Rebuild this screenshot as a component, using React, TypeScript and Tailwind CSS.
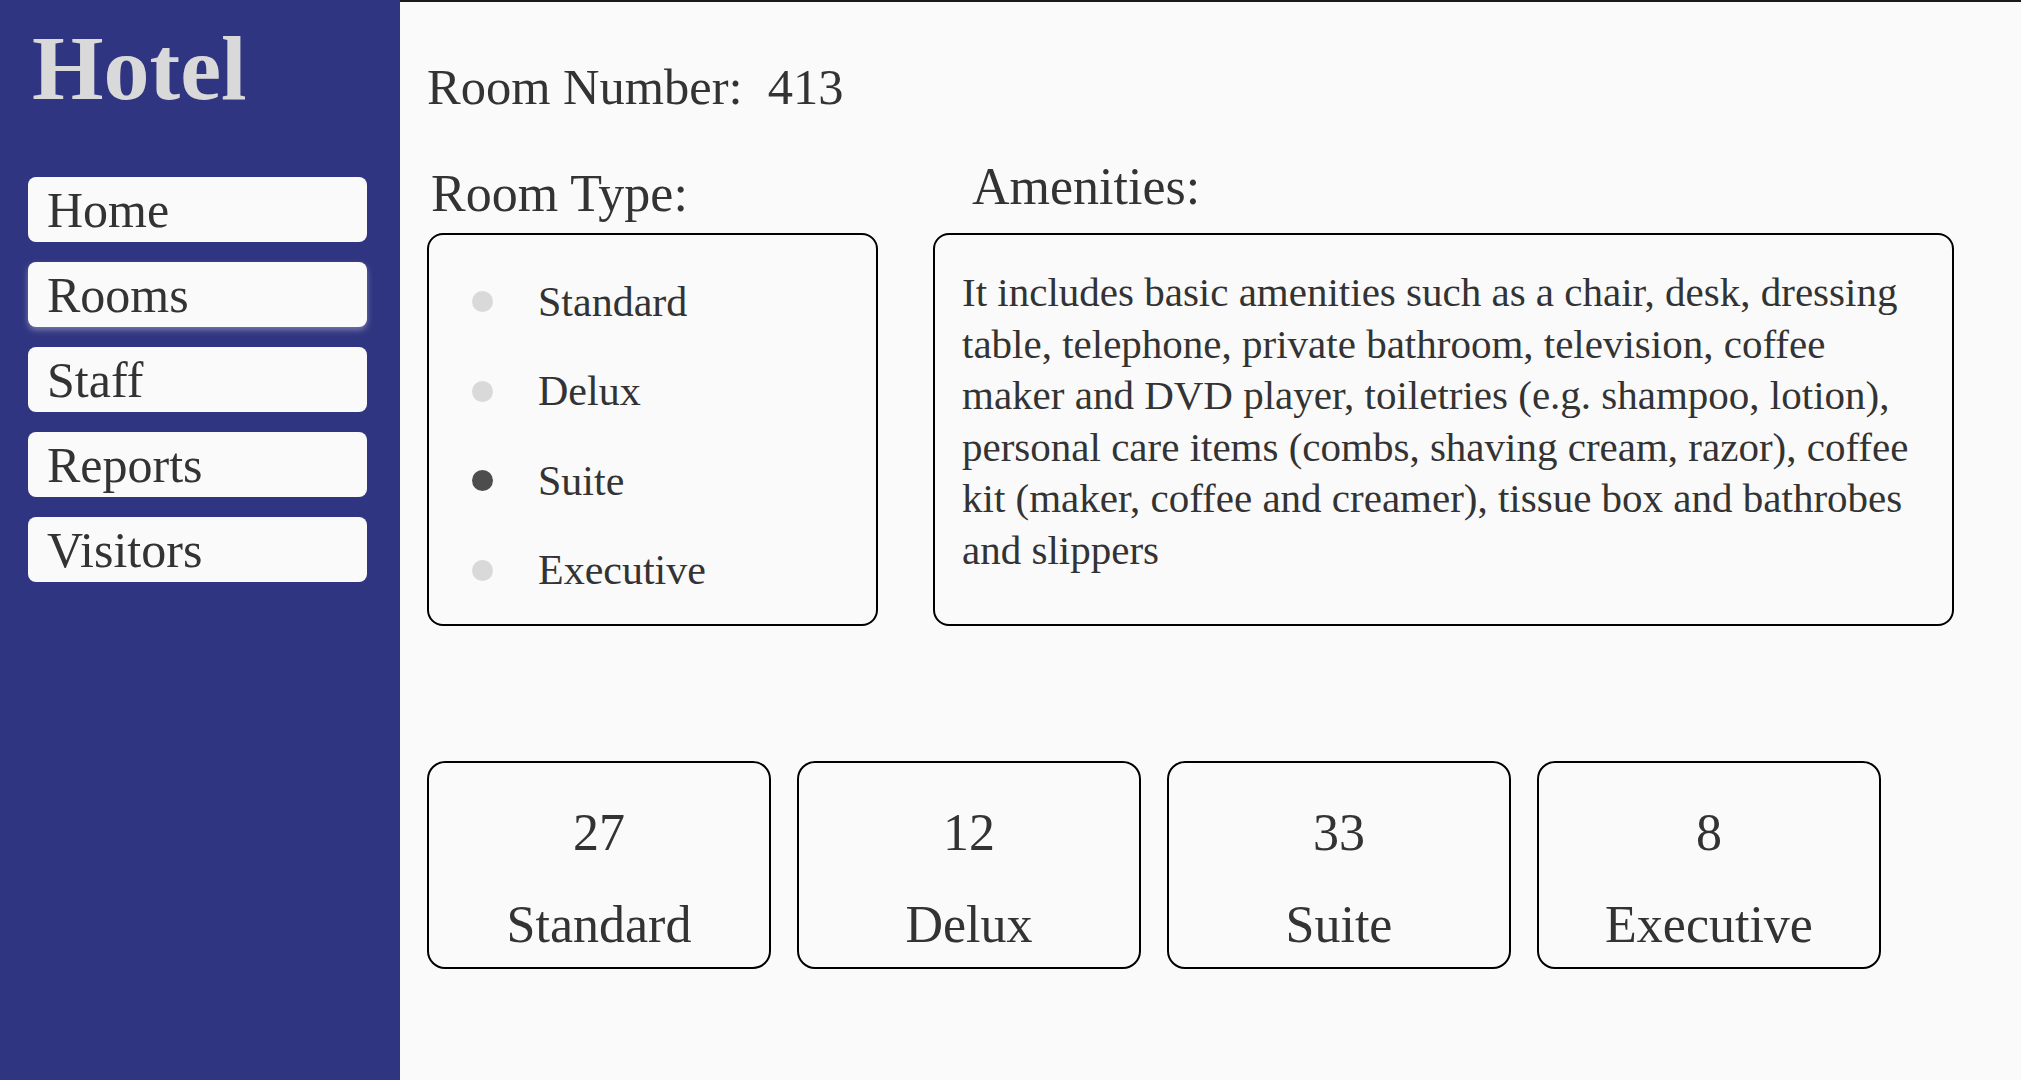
import { useState } from "react";

const navItems = ["Home", "Rooms", "Staff", "Reports", "Visitors"];
const roomTypes = ["Standard", "Delux", "Suite", "Executive"];

const amenityLines = [
  "It includes basic amenities such as a chair, desk, dressing",
  "table, telephone, private bathroom, television, coffee",
  "maker and DVD player, toiletries (e.g. shampoo, lotion),",
  "personal care items (combs, shaving cream, razor), coffee",
  "kit (maker, coffee and creamer), tissue box and bathrobes",
  "and slippers",
];

const counts = [
  { count: 27, label: "Standard" },
  { count: 12, label: "Delux" },
  { count: 33, label: "Suite" },
  { count: 8, label: "Executive" },
];

export default function App() {
  const [selected, setSelected] = useState("Suite");

  return (
    <div className="flex h-[1080px] w-full font-['Liberation_Serif',serif] text-[#333]">
      {/* Sidebar */}
      <aside className="flex w-[400px] shrink-0 flex-col bg-[#2f3580] pl-[28px] pt-[18px]">
        <h1 className="pl-[4px] text-[92px] font-bold leading-[100px] text-[#d9d9d9]">Hotel</h1>
        <nav className="mt-[59px] flex w-[339px] flex-col gap-[20px]">
          {navItems.map((item) => (
            <div
              key={item}
              className={
                item === "Rooms"
                  ? "h-[65px] rounded-[8px] bg-[#fafafa] pl-[19px] pt-[1px] text-[50px] leading-[65px] shadow-[0_3px_6px_rgba(255,255,255,0.35)]"
                  : "h-[65px] rounded-[8px] bg-[#fafafa] pl-[19px] pt-[1px] text-[50px] leading-[65px]"
              }
            >
              {item}
            </div>
          ))}
        </nav>
      </aside>

      {/* Main content */}
      <main className="flex-1 border-t-2 border-[#1a1a1a] bg-[#fafafa] pl-[27px] pt-[55px]">
        <div className="text-[50.5px] leading-[60px]">Room Number:&nbsp;&nbsp;413</div>

        <div className="mt-[40px] flex gap-[55px]">
          <div className="flex w-[451px] flex-col">
            <div className="mb-[9px] pl-[4px] pt-[7px] text-[52px] leading-[60px]">Room Type:</div>
            <div className="h-[393px] rounded-2xl border-2 border-black pl-[43px] pt-[22px]">
              {roomTypes.map((type) => (
                <label key={type} className="flex h-[89.5px] cursor-pointer items-center" onClick={() => setSelected(type)}>
                  <span
                    className={
                      selected === type
                        ? "h-[21px] w-[21px] rounded-full bg-[#4d4d4d]"
                        : "h-[21px] w-[21px] rounded-full bg-[#d9d9d9]"
                    }
                  />
                  <span className="ml-[45px] text-[42px] leading-[48px]">{type}</span>
                </label>
              ))}
            </div>
          </div>

          <div className="flex w-[1021px] flex-col">
            <div className="mb-[16px] pl-[39px] text-[52px] leading-[60px]">Amenities:</div>
            <div className="h-[393px] rounded-2xl border-2 border-black pl-[27px] pt-[32px] text-[41px] leading-[51.5px]">
              {amenityLines.map((line) => (
                <div key={line} className="whitespace-nowrap">
                  {line}
                </div>
              ))}
            </div>
          </div>
        </div>

        {/* Room counts */}
        <div className="mt-[135px] flex gap-[26px]">
          {counts.map((c) => (
            <div
              key={c.label}
              className="flex h-[208px] w-[344px] flex-col items-center rounded-[18px] border-2 border-black pt-[41px] text-[52px] leading-[58px]"
            >
              <div>{c.count}</div>
              <div className="mt-[34px]">{c.label}</div>
            </div>
          ))}
        </div>
      </main>
    </div>
  );
}
